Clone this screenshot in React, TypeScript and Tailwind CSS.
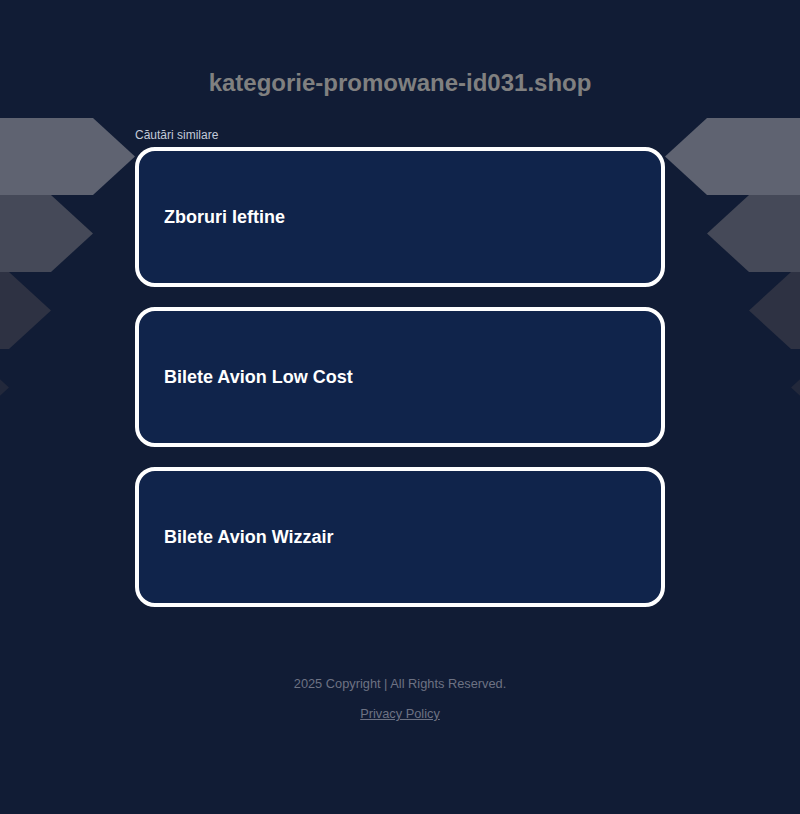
import React from "react";

const searches = ["Zboruri Ieftine", "Bilete Avion Low Cost", "Bilete Avion Wizzair"];

// Decorative arrows on both sides of the page
function Arrows({ side }: { side: "left" | "right" }) {
  const colors = ["#5f6371", "#454958", "#2e3243", "#22283b"];
  const arrow = (i: number) => {
    const y = i * 77;
    const tip = 135 - i * 42;
    const base = tip - 42;
    return (
      <polygon
        key={i}
        points={`-60,${y} ${base},${y} ${tip},${y + 38.5} ${base},${y + 77} -60,${y + 77}`}
        fill={colors[i]}
      />
    );
  };
  return (
    <svg
      width="140"
      height="310"
      viewBox="0 0 140 310"
      className={`absolute top-[118px] ${side === "left" ? "left-0" : "right-0 -scale-x-100"}`}
    >
      {[0, 1, 2, 3].map(arrow)}
    </svg>
  );
}

export default function App() {
  return (
    <div className="relative min-h-[814px] w-full overflow-hidden bg-[#111c35] font-['Liberation_Sans',Arial,sans-serif]">
      <Arrows side="left" />
      <Arrows side="right" />
      <div className="relative flex flex-col items-center pt-[68px]">
        <h1 className="text-[24px] font-bold leading-[30px] text-[#808080]">
          kategorie-promowane-id031.shop
        </h1>
        <div className="mt-[30px] w-[530px]">
          <div className="text-[12px] leading-[14px] text-[#c3cad8]">Căutări similare</div>
          <div className="mt-[5px] flex flex-col gap-[20px]">
            {searches.map((s) => (
              <div
                key={s}
                className="flex h-[140px] items-center rounded-[20px] border-4 border-white bg-[#10244b] pl-[25px]"
              >
                <span className="text-[18px] font-bold text-white">{s}</span>
              </div>
            ))}
          </div>
        </div>
        <div className="mt-[69px] text-[12.8px] leading-[16px] text-[#6d7283]">
          2025 Copyright | All Rights Reserved.
        </div>
        <a href="#" className="mt-[14px] text-[12.8px] leading-[16px] text-[#6d7283] underline">
          Privacy Policy
        </a>
      </div>
    </div>
  );
}
